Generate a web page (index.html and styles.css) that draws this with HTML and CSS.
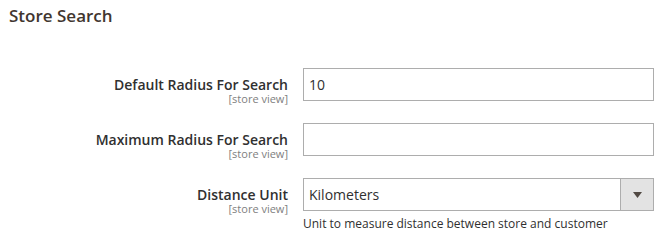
FILE: index.html
```html
<!DOCTYPE html>
<html lang="en">
<head>
  <meta charset="UTF-8" />
  <title>Store Search</title>
  <link rel="stylesheet" href="styles.css">
</head>
<body>
  <h2 class="section-title">Store Search</h2>

  <div class="field">
    <label class="field-label" for="default_radius">
      <span>Default Radius For Search</span>
      <span class="scope">[store view]</span>
    </label>
    <div class="control">
      <input type="text" id="default_radius" value="10">
    </div>
  </div>

  <div class="field">
    <label class="field-label" for="max_radius">
      <span>Maximum Radius For Search</span>
      <span class="scope">[store view]</span>
    </label>
    <div class="control">
      <input type="text" id="max_radius" value="">
    </div>
  </div>

  <div class="field">
    <label class="field-label" for="distance_unit">
      <span>Distance Unit</span>
      <span class="scope">[store view]</span>
    </label>
    <div class="control">
      <div class="select">
        <span class="select-value">Kilometers</span>
        <span class="select-btn">
          <svg width="9" height="6" viewBox="0 0 9 6"><path d="M0 0h9L4.5 6z" fill="#514943"/></svg>
        </span>
      </div>
      <div class="note">Unit to measure distance between store and customer</div>
    </div>
  </div>
</body>
</html>
```

FILE: styles.css
```css
body { margin: 0; font-family: 'Open Sans', sans-serif; color: #303030; background: #fff; }
.section-title { margin: 0 0 41px; padding: 4px 0 0 9px; font-size: 17px; line-height: 23px; font-weight: 600; color: #41362f; }
.field { display: grid; grid-template-columns: 288px 351px; grid-template-rows: 33px; column-gap: 15px; margin-bottom: 22px; }
.field-label { display: flex; flex-direction: column; align-items: flex-end; padding-top: 10px; font-size: 14px; line-height: 14px; font-weight: 600; color: #303030; }
.field-label .scope { margin-top: 2px; font-size: 11px; line-height: 10px; font-weight: 400; color: #808080; }
input {
  box-sizing: border-box;
  width: 100%;
  height: 33px;
  padding: 0 5px;
  border: 1px solid #adadad;
  border-radius: 0;
  font-family: 'Open Sans', sans-serif;
  font-size: 14px;
  color: #303030;
  outline: none;
}
.select { display: flex; box-sizing: border-box; height: 33px; border: 1px solid #adadad; font-size: 14px; }
.select-value { flex: 1; display: flex; align-items: center; padding-left: 5px; }
.select-btn { width: 32px; display: flex; align-items: center; justify-content: center; background: #e3e3e3; border-left: 1px solid #adadad; }
.note { margin-top: 5px; font-size: 12px; line-height: 16px; color: #303030; }
```
